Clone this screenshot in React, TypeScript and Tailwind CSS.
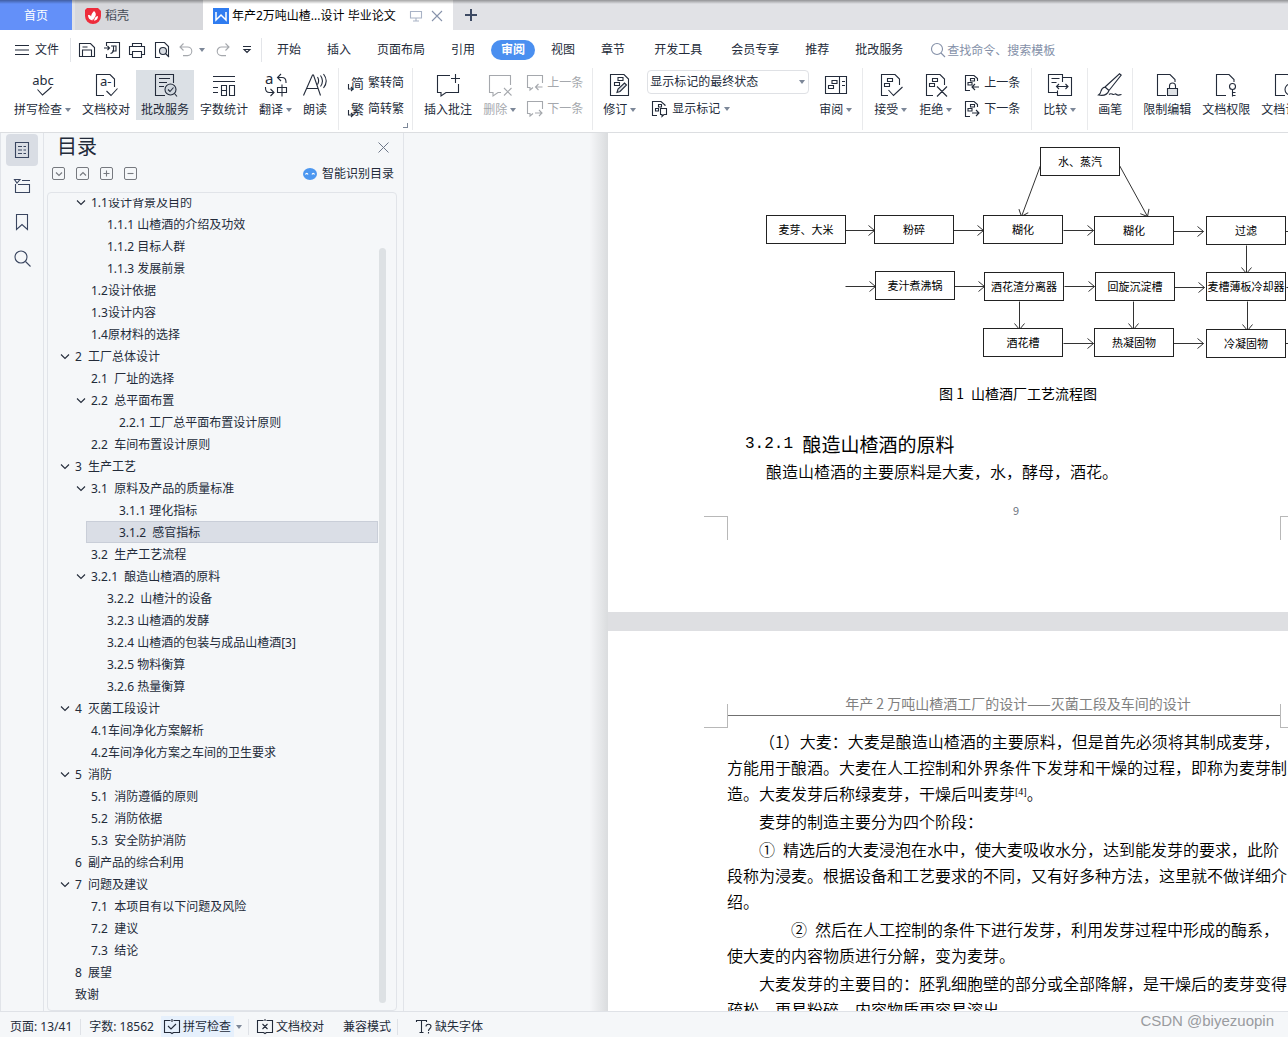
import React from 'react';

interface ChildrenProps {
  children?: React.ReactNode;
  className?: string;
}

const Svg: React.FC<ChildrenProps & { w?: number; h?: number }> = ({ w = 24, h = 24, className = '', children }) => (
  <svg
    width={w}
    height={h}
    viewBox={`0 0 ${w} ${h}`}
    fill="none"
    stroke="currentColor"
    strokeWidth="1.1"
    className={`shrink-0 overflow-visible ${className}`}
    aria-hidden="true"
  >
    {children}
  </svg>
);

const Caret: React.FC<{ className?: string }> = ({ className = '' }) => (
  <Svg w={6} h={4} className={`text-[#7c8798] ${className}`}>
    <path d="M0 0h6L3 4z" fill="currentColor" stroke="none" />
  </Svg>
);

const glyph = { fill: 'currentColor', stroke: 'none' };

/* Ribbon icons, 24x24 */
const SpellIcon = () => (
  <Svg>
    <text x="12" y="12" textAnchor="middle" fontSize="13" {...glyph}>abc</text>
    <path d="M6.500 16.500l5 5.500L20.500 14" />
  </Svg>
);

const ProofIcon = () => (
  <Svg>
    <path d="M10 22.500H2.500v-21H16l4.500 4.500V14" />
    <text x="6" y="13" fontSize="13" {...glyph}>a-</text>
    <path d="M12.500 18l4.500 4.500L23.500 15.500" />
  </Svg>
);

const ReviewServiceIcon = () => (
  <Svg>
    <path d="M12 22.500H2.500v-21h18V10M6 5.500h11M6 9.500h8M6 13.500h5" />
    <circle cx="17.500" cy="16.500" r="5.500" fill="#cfd6dd" />
    <path d="M15 16.500l2 2 3.500-4M21.500 20.500l2.500 3" />
  </Svg>
);

const CountIcon = () => (
  <Svg>
    <path d="M1 3.500h22M1 8.500h22M1 14.500h5M1 19.500h5M9.500 12.500h5v10h-5zM9.500 17.500h5M17.500 12.500h5v10h-5z" />
  </Svg>
);

const TranslateIcon = () => (
  <Svg>
    <text x="1" y="11" fontSize="15" {...glyph}>a</text>
    <path d="M17 1l-3.500 3.500L17 8M14 4.500h4c3 0 4 2 4 4.500v1M1.500 14v1c0 3 1.500 4.500 4 4.500h4M6.500 16l3.500 3.500-3.500 3.500M13.500 14.500h9v5h-9zM18 11.500v12" />
  </Svg>
);

const ReadIcon = () => (
  <Svg>
    <path d="M.500 22.500L9.500 2h1L17.500 22.500M4 15.500h11M14.500 4c1.500 2.500 1.500 5 0 7.500M17.500 2.500c2.500 3.500 2.500 7.500 0 11M20.500 1c3.500 4.500 3.500 9.500 0 14" />
  </Svg>
);

const InsertCommentIcon = () => (
  <Svg>
    <path d="M14 2.500H1.500v17h3.500V23l5-3.500h12.500V11M19.500 1v9M15 5.500h9" />
  </Svg>
);

const DeleteCommentIcon = () => (
  <Svg>
    <path d="M22.500 12V2.500h-21v17h3.500V23l5-3.500h3M16 15l7.500 7.500M23.500 15L16 22.500" />
  </Svg>
);

const ReviseIcon = () => (
  <Svg>
    <path d="M2.500 1.500H16l4.500 4.500v16.500h-18zM10 4.500h5v3h-5zM6.500 9.500h5v3h-5z" />
    <path d="M9 19.500l1-3.500 6.500-6 2 2-6.500 6.500z" fill="#dfe3e8" />
  </Svg>
);

const PaneIcon = () => (
  <Svg>
    <path d="M1.500 3.500h21v17h-21zM15.500 3.500v17M8 7.500h5v3H8zM4.500 12.500h5v3h-5zM18 8.500h3M18 12.500h3" />
  </Svg>
);

const AcceptIcon = () => (
  <Svg>
    <path d="M9 22.500H2.500v-21H16l4.500 4.500v6M8.500 5.500h5v3h-5zM5.500 10.500h5v3h-5zM9.500 17l5 5.500L23.500 14" />
  </Svg>
);

const RejectIcon = () => (
  <Svg>
    <path d="M9 22.500H2.500v-21H16l4.500 4.500v6M8.500 5.500h5v3h-5zM5.500 10.500h5v3h-5zM13 13.500l10 10M23 13.500l-10 10" />
  </Svg>
);

const CompareIcon = () => (
  <Svg>
    <path d="M14.500 4.500v-3H.500v18h9M14.500 4.500h9v18h-14v-5M14.500 4.500V9M3.500 5.500h8M3.500 9.500h5M8.500 13.500h11M11 11l-2.500 2.500L11 16M17.500 11l2.500 2.500-2.500 2.500" />
  </Svg>
);

const BrushIcon = () => (
  <Svg>
    <path d="M7 14L21.500.8l1.700 1.400L11 17.500M7 14l4 3.500M7 14c-3 .5-3.500 2-4 4-.3 2-1 3-2.500 4 5 1 9-.5 10.500-4.500M11 21.500c2-2 3 0 4.500 0s1.500-1.500 3 0 3 0 5 0" />
  </Svg>
);

const LockDocIcon = () => (
  <Svg>
    <path d="M11 22.500H2.500v-21H15l5 5V9" />
    <path d="M14.500 15.500V13a3 3 0 016 0v2.500" />
    <path d="M12.500 15.500h10v7h-10z" fill="#dfe2e6" />
  </Svg>
);

const KeyDocIcon = () => (
  <Svg>
    <path d="M12 22.500H2.500v-21H15l5 5V9M18.500 16.500v7M18.500 19.500h3M18.500 22.500h3" />
    <circle cx="18.500" cy="13.500" r="3" />
  </Svg>
);

const CertDocIcon = () => (
  <Svg>
    <path d="M12 22.500H2.500v-21H15l5 5V9" />
    <circle cx="17.500" cy="16.500" r="5.500" />
  </Svg>
);

/* Small ribbon icons, 16x16 */
const PrevCommentIcon = () => (
  <Svg w={16} h={16}>
    <path d="M15.500 8V.500H.500v12H3V15l3-2.500M8.500 12h7M11.500 9l-3 3 3 3" />
  </Svg>
);

const NextCommentIcon = () => (
  <Svg w={16} h={16}>
    <path d="M15.500 8V.500H.500v12H3V15l3-2.500M8 12h7M12 9l3 3-3 3" />
  </Svg>
);

const PrevChangeIcon = () => (
  <Svg w={16} h={16}>
    <path d="M6 15.500H1.500V.500h8.500l3.500 3V6M6.500 3.500h4v2.500h-4zM4 7.500h4V10H4zM8 12h7M11 9l-3 3 3 3" />
  </Svg>
);

const NextChangeIcon = () => (
  <Svg w={16} h={16}>
    <path d="M6 15.500H1.500V.500h8.500l3.500 3V6M6.500 3.500h4v2.500h-4zM4 7.500h4V10H4zM8 12h7M12 9l3 3-3 3" />
  </Svg>
);

const ShowMarkIcon = () => (
  <Svg w={16} h={16}>
    <path d="M5 14.500H.500v-14H9l4 3.500v1M6.500 3.500h3V6h-3zM3.500 7.500h3V10h-3zM8.500 7.500h6v6H12l-2 2v-2H8.500z" />
  </Svg>
);

const ConvertIcon: React.FC<{ char: string }> = ({ char }) => (
  <Svg w={16} h={16}>
    <text x="3" y="13" fontSize="13" {...glyph}>{char}</text>
    <path d="M.500 9v5h4.500M3 12l2 2-2 2" />
  </Svg>
);

const BigButton: React.FC<{ label: string; icon: React.ReactNode; caret?: boolean; active?: boolean; disabled?: boolean }> = ({
  label,
  icon,
  caret,
  active,
  disabled,
}) => (
  <button
    disabled={disabled}
    className={`flex h-[50px] shrink-0 flex-col items-center gap-1 px-[5px] pt-[3px] ${active ? 'bg-[#dbe0e5]' : ''} ${disabled ? 'text-[#a5a8ad]' : ''}`}
  >
    {icon}
    <span className="flex items-center gap-[3px] leading-[18px] whitespace-nowrap">
      {label}
      {caret && <Caret />}
    </span>
  </button>
);

const SmallButton: React.FC<{ label: string; icon: React.ReactNode; caret?: boolean; disabled?: boolean }> = ({ label, icon, caret, disabled }) => (
  <button
    disabled={disabled}
    className={`flex h-6 shrink-0 items-center gap-1 px-[5px] pt-0.5 whitespace-nowrap ${disabled ? 'text-[#a5a8ad]' : ''}`}
  >
    {icon}
    {label}
    {caret && <Caret />}
  </button>
);

const Group: React.FC<ChildrenProps> = ({ className = 'gap-px', children }) => (
  <div className={`flex shrink-0 border-r border-[#e9eaec] pt-0.5 ${className}`}>{children}</div>
);

const Stack: React.FC<ChildrenProps> = ({ className = '', children }) => (
  <div className={`flex flex-col gap-0.5 ${className}`}>{children}</div>
);

const menuItems = [
  { label: '开始' },
  { label: '插入' },
  { label: '页面布局' },
  { label: '引用' },
  { label: '审阅', active: true },
  { label: '视图' },
  { label: '章节', wide: true },
  { label: '开发工具', wide: true },
  { label: '会员专享' },
  { label: '推荐' },
  { label: '批改服务' },
];

const TitleTabs = () => (
  <div className="relative flex h-[30px] shrink-0 bg-[#e1e2e6]">
    <button className="mr-[3px] w-[72px] bg-[#6390f9] pt-0.5 text-white">首页</button>
    <button className="flex w-[128px] items-center gap-1 bg-[#d7d8dc] pt-0.5 pl-[10px] text-[#444a55]">
      <Svg w={16} h={16}>
        <path d="M8 0h5l3 3v5a8 8 0 01-16 0V2l2-2z" fill="#ee2c3c" stroke="none" />
        <path d="M9 3c3 3 2 5-1 9C5 9 6 6 9 3zM3 7c3 0 4 2 4.500 5.500C4.500 12 3 10 3 7zM13 8c0 3-1.500 4.500-4 4.700C9.500 10 10.500 8.500 13 8z" fill="#fff" stroke="none" />
      </Svg>
      稻壳
    </button>
    <div className="flex w-[250px] items-center bg-white pt-0.5 pl-[10px] text-black">
      <Svg w={16} h={16}>
        <path d="M0 0h16v16H0z" fill="#2f7cf0" stroke="none" />
        <path d="M3 4v8l5-5 5 5V4" stroke="#fff" strokeWidth="1.500" />
      </Svg>
      <span className="ml-[3px] flex-1 whitespace-nowrap">年产2万吨山楂...设计 毕业论文</span>
      <Svg w={12} h={12} className="mr-[9px] text-[#a9b3c6]">
        <path d="M.500 1.500h11v6.500h-11zM6 8v3M3 11h6" />
      </Svg>
      <button aria-label="关闭标签" className="mr-[10px] text-[#8793ab]">
        <Svg w={12} h={12}>
          <path d="M1 1l10 10M11 1L1 11" />
        </Svg>
      </button>
    </div>
    <button aria-label="新建" className="ml-3 text-[#3d4a63]">
      <Svg w={12} h={12}>
        <path d="M6 0v12M0 6h12" strokeWidth="2" />
      </Svg>
    </button>
    <div className="pointer-events-none absolute inset-x-0 top-0 h-1 bg-gradient-to-b from-black/35 to-transparent" />
  </div>
);

const MenuBar = () => (
  <div className="flex h-[38px] shrink-0 items-center pt-0.5">
    <button className="ml-[15px] flex items-center gap-[6px]">
      <Svg w={14} h={12}>
        <path d="M0 1.500h14M0 6h14M0 10.500h14" />
      </Svg>
      文件
    </button>
    <div className="mr-2 ml-[11px] h-6 w-px bg-[#e3e5e9]" />
    <div className="flex items-center gap-[9px]">
      <button aria-label="保存">
        <Svg w={16} h={16}>
          <path d="M.500 1.500h11l4 4v9H.500zM3.500 14.500V8h9v6.500M3.500 5h5" />
        </Svg>
      </button>
      <button aria-label="输出为PDF">
        <Svg w={16} h={16}>
          <path d="M2.500 4V.500h13v15h-13V12M0 6h5M3.500 4l2 2-2 2M7 4h5v5H8M9.500 4v4c0 2-1 3-3 3.500" />
        </Svg>
      </button>
      <button aria-label="打印">
        <Svg w={16} h={16}>
          <path d="M3.500 4.500v-3h9v3M3.500 12.500h-3v-8h15v8h-3M3.500 9.500h9v6h-9z" />
        </Svg>
      </button>
      <button aria-label="打印预览">
        <Svg w={16} h={16}>
          <path d="M6 15.500H1.500V.500h9l4 4V14" />
          <circle cx="9" cy="9" r="3.500" fill="#d9dde3" />
          <path d="M11.500 11.500l3.500 3.500" />
        </Svg>
      </button>
      <button aria-label="撤销" className="flex items-center gap-2 text-[#a5a8ad]">
        <Svg w={14} h={14}>
          <path d="M4.500.500L1 4l3.500 3.500M1 4h7.500a4.300 4.300 0 010 8.600H4" />
        </Svg>
        <Caret className="-ml-0.5" />
      </button>
      <button aria-label="恢复" className="ml-0.5 text-[#a5a8ad]">
        <Svg w={14} h={14}>
          <path d="M9.500.500L13 4 9.500 7.500M13 4H5.500a4.300 4.300 0 000 8.600H10" />
        </Svg>
      </button>
      <button aria-label="自定义快速访问" className="ml-1">
        <Svg w={8} h={8}>
          <path d="M0 .500h8M1 3.500h6L4 6.500z" />
        </Svg>
      </button>
    </div>
    <div className="mr-0.5 ml-[10px] h-6 w-px bg-[#e3e5e9]" />
    <nav className="flex items-center">
      {menuItems.map(item => (
        <button
          key={item.label}
          className={`shrink-0 whitespace-nowrap ${item.active ? 'mx-[3px] h-5 rounded-full bg-[#4a8ff0] px-[10px] font-bold text-white' : 'px-[13px]'} ${item.wide ? 'mr-[3px]' : ''}`}
        >
          {item.label}
        </button>
      ))}
    </nav>
    <div className="ml-[14px] flex items-center gap-px text-[#8490a8]">
      <Svg w={16} h={16}>
        <circle cx="7" cy="7" r="5.500" />
        <path d="M11 11l4 4" />
      </Svg>
      <input
        type="text"
        aria-label="查找命令"
        placeholder="查找命令、搜索模板"
        className="h-6 w-40 bg-transparent outline-none placeholder:text-[#8490a8]"
      />
    </div>
  </div>
);

const Ribbon = () => (
  <div className="flex h-[65px] shrink-0 overflow-hidden border-b border-[#dcdee1] pb-0.5">
    <Group className="gap-px pr-[6px] pl-[9px]">
      <BigButton label="拼写检查" icon={<SpellIcon />} caret />
      <BigButton label="文档校对" icon={<ProofIcon />} />
      <BigButton label="批改服务" icon={<ReviewServiceIcon />} active />
      <BigButton label="字数统计" icon={<CountIcon />} />
      <BigButton label="翻译" icon={<TranslateIcon />} caret />
      <BigButton label="朗读" icon={<ReadIcon />} />
    </Group>
    <Group className="relative pr-[3px] pl-1">
      <Stack>
        <SmallButton label="繁转简" icon={<ConvertIcon char="简" />} />
        <SmallButton label="简转繁" icon={<ConvertIcon char="繁" />} />
      </Stack>
      <span className="absolute right-1 bottom-0.5 h-[5px] w-[5px] border-r border-b border-[#7c8798]" />
    </Group>
    <Group className="gap-px pr-1 pl-[6px]">
      <BigButton label="插入批注" icon={<InsertCommentIcon />} />
      <BigButton label="删除" icon={<DeleteCommentIcon />} caret disabled />
      <Stack>
        <SmallButton label="上一条" icon={<PrevCommentIcon />} disabled />
        <SmallButton label="下一条" icon={<NextCommentIcon />} disabled />
      </Stack>
    </Group>
    <Group className="gap-px px-[5px]">
      <BigButton label="修订" icon={<ReviseIcon />} caret />
      <Stack className="mr-1 ml-[5px]">
        <div className="relative">
          <select
            aria-label="显示状态"
            className="block h-6 w-[162px] appearance-none rounded-sm border border-[#dfe1e5] bg-white pl-0.5 text-xs outline-none"
          >
            <option>显示标记的最终状态</option>
          </select>
          <Caret className="pointer-events-none absolute top-[10px] right-1" />
        </div>
        <SmallButton label="显示标记" icon={<ShowMarkIcon />} caret />
      </Stack>
      <BigButton label="审阅" icon={<PaneIcon />} caret />
    </Group>
    <Group className="gap-0.5 px-[6px]">
      <BigButton label="接受" icon={<AcceptIcon />} caret />
      <BigButton label="拒绝" icon={<RejectIcon />} caret />
      <Stack>
        <SmallButton label="上一条" icon={<PrevChangeIcon />} />
        <SmallButton label="下一条" icon={<NextChangeIcon />} />
      </Stack>
    </Group>
    <Group className="px-[6px]">
      <BigButton label="比较" icon={<CompareIcon />} caret />
    </Group>
    <Group className="px-[5px]">
      <BigButton label="画笔" icon={<BrushIcon />} />
    </Group>
    <Group className="gap-px pl-[5px]">
      <BigButton label="限制编辑" icon={<LockDocIcon />} />
      <BigButton label="文档权限" icon={<KeyDocIcon />} />
      <BigButton label="文档认证" icon={<CertDocIcon />} />
    </Group>
  </div>
);

const SideRail = () => (
  <div className="flex w-11 shrink-0 flex-col gap-1 border-x border-[#e1e4e9] px-[5px] pt-px text-[#3a4660]">
    <button aria-label="目录" className="flex h-8 items-center justify-center rounded-sm bg-[#d9dde4]">
      <Svg w={16} h={18}>
        <path d="M1.500 1.500h13v15h-13zM4 5.500h4M9.500 5.500h2.500M4 9h4M9.500 9h2.500M4 12.500h4M9.500 12.500h2.500" />
      </Svg>
    </button>
    <button aria-label="章节" className="flex h-8 items-center justify-center">
      <Svg w={16} h={16}>
        <path d="M.500 1.500h5.500L3 5zM8 2.500h8M1.500 6v8.500h14v-8H4" />
      </Svg>
    </button>
    <button aria-label="书签" className="flex h-8 items-center justify-center">
      <Svg w={16} h={18}>
        <path d="M2.500 1.500h11v15L8 11.500l-5.500 5z" />
      </Svg>
    </button>
    <button aria-label="查找" className="flex h-8 items-center justify-center">
      <Svg w={17} h={17}>
        <circle cx="7" cy="7" r="6" />
        <path d="M11.500 11.500l5 5" />
      </Svg>
    </button>
  </div>
);

const outline = [
  { level: 1, text: '1.1设计背景及目的', open: true },
  { level: 2, text: '1.1.1 山楂酒的介绍及功效' },
  { level: 2, text: '1.1.2 目标人群' },
  { level: 2, text: '1.1.3 发展前景' },
  { level: 1, text: '1.2设计依据' },
  { level: 1, text: '1.3设计内容' },
  { level: 1, text: '1.4原材料的选择' },
  { level: 0, text: '2  工厂总体设计', open: true },
  { level: 1, text: '2.1  厂址的选择' },
  { level: 1, text: '2.2  总平面布置', open: true },
  { level: 3, text: '2.2.1 工厂总平面布置设计原则' },
  { level: 1, text: '2.2  车间布置设计原则' },
  { level: 0, text: '3  生产工艺', open: true },
  { level: 1, text: '3.1  原料及产品的质量标准', open: true },
  { level: 3, text: '3.1.1 理化指标' },
  { level: 3, text: '3.1.2  感官指标', selected: true },
  { level: 1, text: '3.2  生产工艺流程' },
  { level: 1, text: '3.2.1  酿造山楂酒的原料', open: true },
  { level: 2, text: '3.2.2  山楂汁的设备' },
  { level: 2, text: '3.2.3 山楂酒的发酵' },
  { level: 2, text: '3.2.4 山楂酒的包装与成品山楂酒[3]' },
  { level: 2, text: '3.2.5 物料衡算' },
  { level: 2, text: '3.2.6 热量衡算' },
  { level: 0, text: '4  灭菌工段设计', open: true },
  { level: 1, text: '4.1车间净化方案解析' },
  { level: 1, text: '4.2车间净化方案之车间的卫生要求' },
  { level: 0, text: '5  消防', open: true },
  { level: 1, text: '5.1  消防遵循的原则' },
  { level: 1, text: '5.2  消防依据' },
  { level: 1, text: '5.3  安全防护消防' },
  { level: 0, text: '6  副产品的综合利用' },
  { level: 0, text: '7  问题及建议', open: true },
  { level: 1, text: '7.1  本项目有以下问题及风险' },
  { level: 1, text: '7.2  建议' },
  { level: 1, text: '7.3  结论' },
  { level: 0, text: '8  展望' },
  { level: 0, text: '致谢' },
];

const indents = ['pl-3', 'pl-7', 'pl-11', 'pl-14'];

const toolShapes = [
  { label: '展开', d: 'M4 5.500l3 3 3-3' },
  { label: '收起', d: 'M4 8.500l3-3 3 3' },
  { label: '增加级别', d: 'M6.500 3.500v6M3.500 6.500h6' },
  { label: '减少级别', d: 'M3.500 6.500h6' },
];

const OutlinePanel = () => (
  <aside className="flex w-[360px] shrink-0 flex-col border-r border-[#e1e4e9]">
    <div className="flex h-7 items-center justify-between pr-[14px] pl-[13px]">
      <h2 className="text-xl leading-7">目录</h2>
      <button aria-label="关闭目录" className="text-[#6d7789]">
        <Svg w={11} h={11}>
          <path d="M.500.500l10 10M10.500.500l-10 10" strokeWidth="1" />
        </Svg>
      </button>
    </div>
    <div className="flex h-6 items-center gap-[10px] pt-0.5 pr-[9px] pl-2">
      {toolShapes.map(tool => (
        <button key={tool.label} aria-label={tool.label} className="text-[#76797f]">
          <Svg w={14} h={14}>
            <rect x=".500" y=".500" width="12" height="12" rx="1.500" strokeWidth="1" />
            <path d={tool.d} />
          </Svg>
        </button>
      ))}
      <button className="ml-auto flex items-center gap-[5px]">
        <Svg w={14} h={12}>
          <ellipse cx="7" cy="6" rx="7" ry="6" fill="#4c97f0" stroke="none" />
          <path d="M2.500 6.500c.5-1.500 2-1.500 2.500 0M9 6.500c.5-1.500 2-1.500 2.500 0" stroke="#fff" />
        </Svg>
        智能识别目录
      </button>
    </div>
    <div className="mt-[7px] mr-[6px] ml-[3px] flex min-h-0 flex-1 rounded-sm border border-[#e1e4e9] pt-[5px]">
      <ul className="min-w-0 flex-1 overflow-hidden">
        {outline.map((item, index) => (
          <li key={index} className={index === 0 ? '-mt-[7px]' : ''}>
            {item.selected ? (
              <button className="ml-[38px] flex h-[22px] w-[292px] items-center border border-[#c9ced8] bg-[#dadee6] pt-0.5 pl-8 whitespace-pre">
                {item.text}
              </button>
            ) : (
              <button className={`flex h-[22px] items-center pt-0.5 whitespace-pre ${indents[item.level]}`}>
                <span className="w-[15px]">
                  {item.open && (
                    <Svg w={10} h={8}>
                      <path d="M1 1.500l4 4 4-4" />
                    </Svg>
                  )}
                </span>
                {item.text}
              </button>
            )}
          </li>
        ))}
      </ul>
      <div className="flex w-[18px] pt-[50px] pb-[7px] pl-px">
        <div className="w-[7px] rounded-full bg-[#dde1e4]" />
      </div>
    </div>
  </aside>
);

const nodes = [
  { x: 432, y: 15, text: '水、蒸汽' },
  { x: 158, y: 83, text: '麦芽、大米' },
  { x: 266, y: 83, text: '粉碎' },
  { x: 375, y: 83, text: '糊化' },
  { x: 486, y: 84, text: '糊化' },
  { x: 598, y: 84, text: '过滤' },
  { x: 267, y: 139, text: '麦汁煮沸锅' },
  { x: 376, y: 140, text: '酒花渣分离器' },
  { x: 487, y: 140, text: '回旋沉淀槽' },
  { x: 598, y: 140, text: '麦槽薄板冷却器' },
  { x: 375, y: 196, text: '酒花槽' },
  { x: 486, y: 196, text: '热凝固物' },
  { x: 598, y: 197, text: '冷凝固物' },
];

const arrows = [
  [237, 97, 266, 97],
  [345, 97, 375, 97],
  [455, 97, 485, 97],
  [565, 98, 595, 98],
  [237, 153, 267, 153],
  [346, 153, 376, 153],
  [456, 153, 486, 153],
  [566, 154, 596, 154],
  [455, 210, 485, 210],
  [565, 210, 595, 210],
  [638, 112, 638, 140],
  [411, 168, 411, 196],
  [525, 168, 525, 196],
  [639, 168, 639, 197],
  [432, 32, 413, 83],
  [511, 32, 539, 83],
  [677, 98, 706, 98],
  [678, 154, 706, 154],
  [677, 210, 706, 210],
];

const FlowChart = () => (
  <svg width="792" height="247" viewBox="0 0 792 247" className="block" role="img" aria-label="工艺流程图">
    <defs>
      <marker id="head" markerWidth="8" markerHeight="12" refX="7" refY="6" orient="auto" markerUnits="userSpaceOnUse">
        <path d="M1 1l6 5-6 5" fill="none" stroke="#333" />
      </marker>
    </defs>
    {arrows.map(([x1, y1, x2, y2], index) => (
      <line key={index} x1={x1 + 0.5} y1={y1 + 0.5} x2={x2 + 0.5} y2={y2 + 0.5} stroke="#333" markerEnd="url(#head)" />
    ))}
    {nodes.map((node, index) => (
      <g key={index}>
        <rect x={node.x + 0.5} y={node.y - 0.5} width="79" height="28" fill="#fff" stroke="#222" />
        <text x={node.x + 40} y={node.y + 18} textAnchor="middle" fontSize="11" fill="#000">{node.text}</text>
      </g>
    ))}
  </svg>
);

const paragraphs: { indent: string; lines: React.ReactNode[] }[] = [
  {
    indent: 'indent-8',
    lines: [
      '（1）大麦：大麦是酿造山楂酒的主要原料，但是首先必须将其制成麦芽，',
      '方能用于酿酒。大麦在人工控制和外界条件下发芽和干燥的过程，即称为麦芽制',
      <>造。大麦发芽后称绿麦芽，干燥后叫麦芽<sup className="font-['Liberation_Serif',serif] text-[10px] leading-none">[4]</sup>。</>,
    ],
  },
  { indent: 'indent-8', lines: ['麦芽的制造主要分为四个阶段：'] },
  {
    indent: 'indent-8',
    lines: [
      '①\u2002精选后的大麦浸泡在水中，使大麦吸收水分，达到能发芽的要求，此阶',
      '段称为浸麦。根据设备和工艺要求的不同，又有好多种方法，这里就不做详细介',
      '绍。',
    ],
  },
  {
    indent: 'indent-16',
    lines: ['②\u2002然后在人工控制的条件下进行发芽，利用发芽过程中形成的酶系，', '使大麦的内容物质进行分解，变为麦芽。'],
  },
  {
    indent: 'indent-8',
    lines: ['大麦发芽的主要目的：胚乳细胞壁的部分或全部降解，是干燥后的麦芽变得', '疏松，更易粉碎，内容物质更容易溶出。'],
  },
];

const DocumentArea = () => (
  <main className="flex min-w-0 flex-1 overflow-hidden font-['Noto_Sans_CJK_SC',sans-serif] text-black">
    <div className="w-[186px] shrink-0" />
    <div className="w-[18px] shrink-0 bg-gradient-to-r from-[#f5f6f8] to-[#dadcde]" />
    <div className="flex shrink-0 flex-col gap-[19px] bg-[#dedfe2]">
      <section className="w-[792px] bg-white pb-[72px]">
        <FlowChart />
        <p className="pl-7 text-center text-sm leading-[26px]">图 1&ensp;山楂酒厂工艺流程图</p>
        <h3 className="mt-6 flex h-7 items-center pl-[137px] text-[19px] leading-7 whitespace-pre">
          <span className="font-['Liberation_Mono',monospace] text-base">3.2.1 </span>
          酿造山楂酒的原料
        </h3>
        <p className="pl-[158px] text-base leading-[26px] font-[350]">酿造山楂酒的主要原料是大麦，水，酵母，酒花。</p>
        <div className="mt-4 flex justify-between px-24">
          <span className="mt-4 h-6 w-6 border-t border-r border-[#b8b8b8]" />
          <span className="pl-6 text-[11px] leading-5 text-[#6b7280]">9</span>
          <span className="mt-4 h-6 w-6 border-t border-l border-[#b8b8b8]" />
        </div>
      </section>
      <section className="w-[792px] bg-white pt-[61px]">
        <div className="flex h-9 px-24">
          <span className="h-6 w-6 self-end border-r border-b border-[#b8b8b8]" />
          <p className="h-6 flex-1 border-b border-[#707070] pl-7 text-center text-sm leading-[22px] text-[#808080]">
            年产 2 万吨山楂酒工厂的设计——灭菌工段及车间的设计
          </p>
          <span className="h-6 w-6 self-end border-b border-l border-[#b8b8b8]" />
        </div>
        <div className="flex flex-col gap-0.5 px-[119px] text-base leading-[26px] font-[350] whitespace-nowrap">
          {paragraphs.map((paragraph, index) => (
            <p key={index} className={paragraph.indent}>
              {paragraph.lines.map((line, lineIndex) => (
                <React.Fragment key={lineIndex}>
                  {lineIndex > 0 && <br />}
                  {line}
                </React.Fragment>
              ))}
            </p>
          ))}
        </div>
      </section>
    </div>
  </main>
);

const StatusBar = () => (
  <footer className="flex h-[26px] shrink-0 items-center border-t border-[#dfe2e7] bg-[#f5f7f9] pt-1 pl-[10px] whitespace-nowrap">
    <span>页面: 13/41</span>
    <span className="mx-2 h-4 w-px bg-[#dfe2e7]" />
    <span>字数: 18562</span>
    <button className="ml-[7px] flex h-[22px] items-center gap-[3px] bg-[#e6f0fc] px-[3px]">
      <Svg w={16} h={15}>
        <path d="M6.500 1.500h-6v12h6l1.500 1 1.500-1h6v-12h-6M8 0v3M4 7l3 3 5-5" />
      </Svg>
      拼写检查
    </button>
    <Caret className="ml-0.5" />
    <span className="mr-2 ml-[6px] h-4 w-px bg-[#dfe2e7]" />
    <button className="flex items-center gap-[3px]">
      <Svg w={16} h={15}>
        <path d="M6.500 1.500h-6v12h6l1.500 1 1.500-1h6v-12h-6M8 0v2M5.500 5l5 5M10.500 5l-5 5" />
      </Svg>
      文档校对
    </button>
    <button className="ml-[19px]">兼容模式</button>
    <span className="mr-[18px] ml-[6px] h-4 w-px bg-[#dfe2e7]" />
    <button className="flex items-center gap-[3px]">
      <Svg w={16} h={15}>
        <path d="M.500 3V1.500h10V3M5.500 1.500v12M3.500 13.500h4M10 7.500c0-3 5-3 5 0 0 2-2.500 2-2.500 4.500M12.500 13v1.500" />
      </Svg>
      缺失字体
    </button>
    <span className="mr-[14px] mb-3 ml-auto font-['Liberation_Sans',sans-serif] text-[15px] text-[#999b9f]">CSDN @biyezuopin</span>
  </footer>
);

const App: React.FC = () => (
  <div className="flex h-screen w-full flex-col overflow-hidden bg-white font-['Noto_Sans','Noto_Sans_CJK_SC',sans-serif] text-xs text-[#232b3a]">
    <TitleTabs />
    <MenuBar />
    <Ribbon />
    <div className="flex min-h-0 flex-1 bg-[#f5f7f9]">
      <SideRail />
      <OutlinePanel />
      <DocumentArea />
    </div>
    <StatusBar />
  </div>
);

export default App;
